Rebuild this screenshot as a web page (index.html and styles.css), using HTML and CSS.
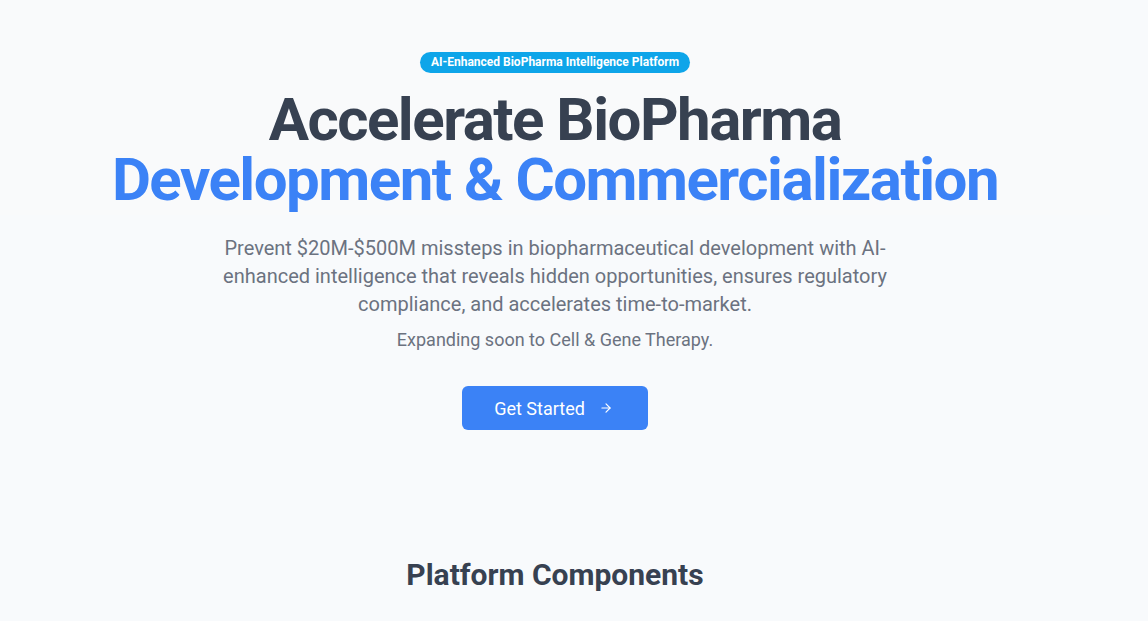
FILE: index.html
```html
<!DOCTYPE html>
<html lang="en">
<head>
<meta charset="utf-8">
<title>BioPharma Intelligence Platform</title>
<link rel="stylesheet" href="styles.css">
</head>
<body>
<div class="page">
  <section class="hero">
    <span class="badge">AI-Enhanced BioPharma Intelligence Platform</span>
    <h1 class="title">Accelerate BioPharma <br><span class="accent">Development &amp; Commercialization</span></h1>
    <p class="lead">Prevent $20M-$500M missteps in biopharmaceutical development with AI-enhanced intelligence that reveals hidden opportunities, ensures regulatory compliance, and accelerates time-to-market.</p>
    <p class="note">Expanding soon to Cell &amp; Gene Therapy.</p>
    <a class="cta" href="#">Get Started
      <svg class="cta-icon" viewBox="0 0 24 24" width="16" height="16" fill="none" stroke="currentColor" stroke-width="2" stroke-linecap="round" stroke-linejoin="round"><path d="M5 12h14"/><path d="M12 5l7 7-7 7"/></svg>
    </a>
  </section>
  <section class="components">
    <h2 class="section-title">Platform Components</h2>
  </section>
</div>
</body>
</html>
```
FILE: styles.css
```css
* { box-sizing: border-box; }
html, body { margin: 0; padding: 0; }
body {
  background: #f8fafc;
  font-family: Roboto, "Liberation Sans", sans-serif;
  color: #374151;
  height: 621px;
  overflow: hidden;
}
.page {
  width: 1110px;
}
.hero {
  display: flex;
  flex-direction: column;
  align-items: center;
  text-align: center;
  padding-top: 52px;
  background: linear-gradient(#f9fafb, #f9fafb 215px, #f8fafc 215px);
}
.badge {
  display: inline-block;
  background: #0ea5e9;
  color: #fff;
  font-size: 12px;
  font-weight: 700;
  line-height: 21px;
  height: 21px;
  padding: 0 11px;
  border-radius: 999px;
}
.title {
  margin: 17px 0 0;
  font-size: 60px;
  line-height: 60px;
  font-weight: 700;
  color: #374151;
  letter-spacing: -1.5px;
}
.accent { color: #3b82f6; }
.lead {
  margin: 24px 0 0;
  max-width: 672px;
  font-size: 20px;
  line-height: 28px;
  color: #6b7280;
}
.note {
  margin: 10px 0 0;
  font-size: 18px;
  line-height: 24px;
  color: #6b7280;
}
.cta {
  margin-top: 34px;
  display: inline-flex;
  align-items: center;
  gap: 14px;
  height: 44px;
  padding: 0 35px 0 32px;
  background: #3b82f6;
  color: #fff;
  text-decoration: none;
  font-size: 18px;
  border-radius: 6px;
}
.cta-icon { width: 14px; height: 14px; }
.components {
  text-align: center;
  padding-top: 127px;
}
.section-title {
  margin: 0;
  font-size: 30px;
  line-height: 36px;
  font-weight: 700;
  color: #374151;
}
```
